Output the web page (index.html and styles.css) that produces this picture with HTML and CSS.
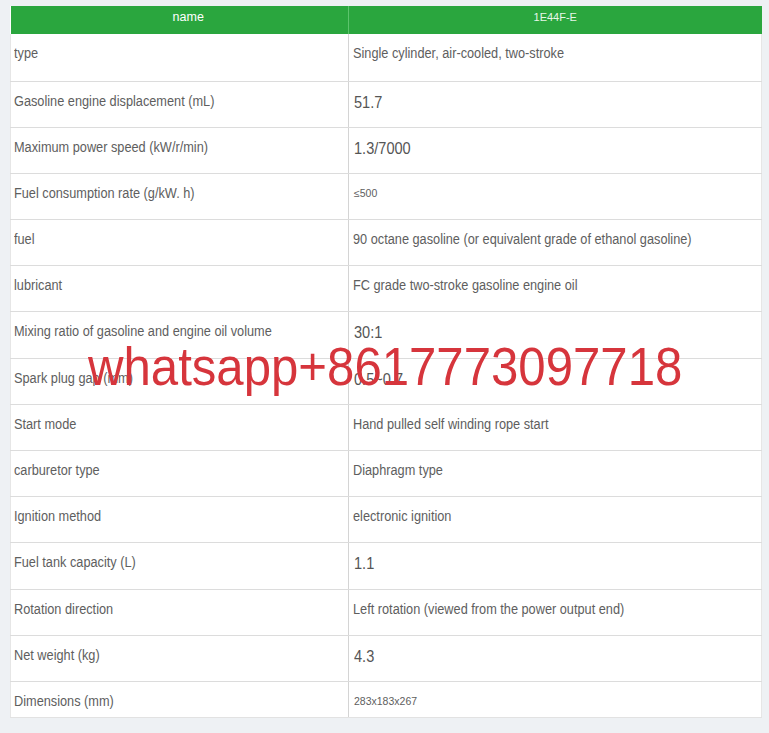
FILE: index.html
```html
<!DOCTYPE html>
<html lang="en">
<head>
<meta charset="utf-8">
<title>1E44F-E specifications</title>
<link rel="stylesheet" href="styles.css">
</head>
<body>
<div class="sheet">
  <table class="spec">
    <colgroup><col class="c1"><col class="c2"></colgroup>
    <thead>
      <tr class="head"><th class="hname"><span>name</span></th><th class="hmodel"><span>1E44F-E</span></th></tr>
    </thead>
    <tbody>
      <tr class="first"><td><span class="sq">type</span></td><td><span class="sq">Single cylinder, air-cooled, two-stroke</span></td></tr>
      <tr><td><span class="sq">Gasoline engine displacement (mL)</span></td><td class="big"><span class="sq">51.7</span></td></tr>
      <tr><td><span class="sq">Maximum power speed (kW/r/min)</span></td><td class="big"><span class="sq">1.3/7000</span></td></tr>
      <tr><td><span class="sq">Fuel consumption rate (g/kW. h)</span></td><td class="small"><span>≤500</span></td></tr>
      <tr><td><span class="sq">fuel</span></td><td><span class="sq">90 octane gasoline (or equivalent grade of ethanol gasoline)</span></td></tr>
      <tr><td><span class="sq">lubricant</span></td><td><span class="sq">FC grade two-stroke gasoline engine oil</span></td></tr>
      <tr class="tall"><td><span class="sq">Mixing ratio of gasoline and engine oil volume</span></td><td class="big"><span class="sq">30:1</span></td></tr>
      <tr><td><span class="sq">Spark plug gap (mm)</span></td><td class="big"><span class="sq">0.5~0.7</span></td></tr>
      <tr><td><span class="sq">Start mode</span></td><td><span class="sq">Hand pulled self winding rope start</span></td></tr>
      <tr><td><span class="sq">carburetor type</span></td><td><span class="sq">Diaphragm type</span></td></tr>
      <tr><td><span class="sq">Ignition method</span></td><td><span class="sq">electronic ignition</span></td></tr>
      <tr class="tall"><td><span class="sq">Fuel tank capacity (L)</span></td><td class="big"><span class="sq">1.1</span></td></tr>
      <tr><td><span class="sq">Rotation direction</span></td><td><span class="sq">Left rotation (viewed from the power output end)</span></td></tr>
      <tr><td><span class="sq">Net weight (kg)</span></td><td class="big"><span class="sq">4.3</span></td></tr>
      <tr class="last"><td><span class="sq">Dimensions (mm)</span></td><td class="small"><span>283x183x267</span></td></tr>
    </tbody>
  </table>
  <div class="watermark">whatsapp+8617773097718</div>
</div>
</body>
</html>
```

FILE: styles.css
```css
html, body {
  margin: 0;
  padding: 0;
  background: #eef1f4;
}
body {
  font-family: "Liberation Sans", Arial, sans-serif;
  color: #5e5e5e;
}
.sheet {
  position: relative;
  padding: 6px 8px 16px 10px;
}
.spec {
  width: 751px;
  border-collapse: collapse;
  table-layout: fixed;
  background: #fff;
}
.c1 { width: 338px; }
.c2 { width: 413px; }
.head th {
  height: 28px;
  padding: 4px 0 0 0;
  background: #2aa63e;
  color: #fff;
  font-weight: normal;
  font-size: 11px;
  line-height: 15px;
  vertical-align: top;
  text-align: center;
  box-sizing: border-box;
}
.head th + th {
  border-left: 1px solid #5cc46c;
}
.head .hname { padding-left: 18px; font-size: 12.5px; }
.head .hmodel { color: #e8f6ea; }
.spec td {
  height: 46px;
  box-sizing: border-box;
  padding: 10px 4px 0 3px;
  vertical-align: top;
  border-bottom: 1px solid #dcdcdc;
  font-size: 14px;
  line-height: 18px;
  white-space: nowrap;
}
.spec td:first-child { border-left: 1px solid #e6e6e6; }
.spec td + td {
  border-left: 1px solid #d4d4d4;
  border-right: 1px solid #e6e6e6;
  padding-left: 4px;
}
.spec tr.first td { height: 47px; }
.spec tr.tall td { height: 47px; }
.spec tr.last td { height: 36px; border-bottom: 1px solid #e2e2e2; }
.spec td.big {
  font-size: 16px;
  color: #555;
  padding-top: 12px;
  padding-left: 5px;
}
.spec td.small {
  font-size: 10.5px;
  padding-top: 10px;
  padding-left: 5px;
}
.sq {
  display: inline-block;
  transform: scaleX(0.91);
  transform-origin: left center;
}
.watermark {
  position: absolute;
  left: 88px;
  top: 339px;
  font-family: "Liberation Sans", Arial, sans-serif;
  font-size: 54px;
  line-height: 54px;
  color: #d6353c;
  white-space: nowrap;
  transform: scaleX(0.91);
  transform-origin: left top;
}
```
